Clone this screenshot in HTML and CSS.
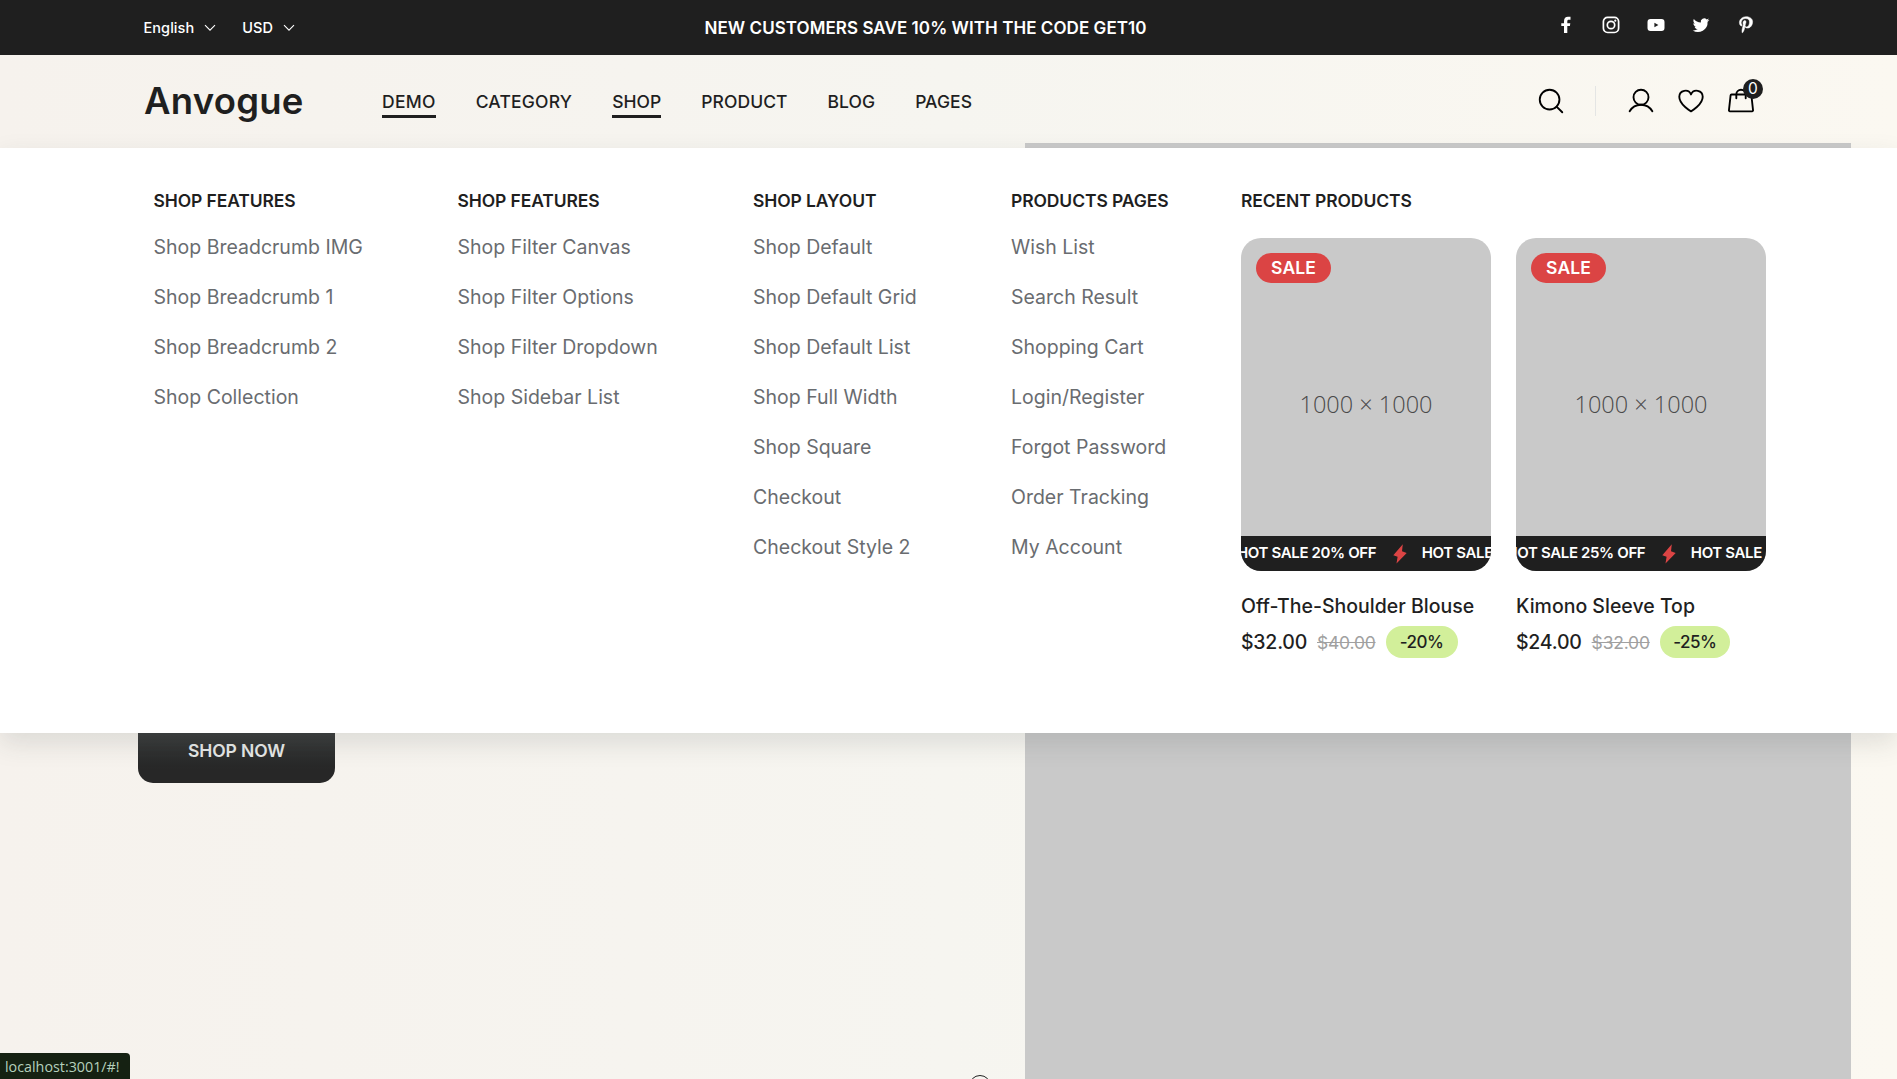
FILE: index.html
```html
<!DOCTYPE html>
<html lang="en">
<head>
<meta charset="utf-8">
<title>Anvogue</title>
<link rel="stylesheet" href="styles.css">
</head>
<body>
<div class="topbar">
  <div class="selects">
    <span class="select">English <svg class="caret" viewBox="0 0 12 8"><path d="M1 1.2l5 5 5-5"/></svg></span>
    <span class="select">USD <svg class="caret" viewBox="0 0 12 8"><path d="M1 1.2l5 5 5-5"/></svg></span>
  </div>
  <div class="promo">NEW CUSTOMERS SAVE 10% WITH THE CODE GET10</div>
  <div class="social">
    <svg viewBox="0 0 20 20"><path d="M8 18v-7H5.300V8.200H8V6c0-2.700 1.600-4.200 4-4.200h2.500v2.900h-1.600c-1.300 0-1.600.6-1.600 1.500v2h3l-.4 2.800h-2.600v7z"/></svg>
    <svg viewBox="0 0 20 20"><g fill="none" stroke="#fff"><rect x="2.400" y="2.300" width="15.200" height="15.200" rx="4.200" stroke-width="1.700"/><circle cx="10" cy="10" r="3.700" stroke-width="1.700"/></g><circle cx="14.300" cy="5.700" r="1.100"/></svg>
    <svg viewBox="0 0 20 20"><path fill-rule="evenodd" d="M4.500 3.900h11a3 3 0 0 1 3 3v6.200a3 3 0 0 1-3 3h-11a3 3 0 0 1-3-3V6.900a3 3 0 0 1 3-3zM8.400 7.800v4.400l4-2.200z"/></svg>
    <svg viewBox="0 0 24 24"><path d="M22 5.900c-.7.300-1.500.6-2.400.7.900-.5 1.500-1.300 1.800-2.300-.8.500-1.700.8-2.600 1a4.100 4.100 0 0 0-7 3.700C8.400 8.900 5.400 7.300 3.400 4.800c-1.100 1.900-.5 4.300 1.300 5.500-.7 0-1.300-.2-1.900-.5 0 2 1.400 3.700 3.300 4.100-.6.200-1.200.2-1.800.1.500 1.600 2 2.800 3.800 2.800A8.300 8.300 0 0 1 2 18.500a11.600 11.600 0 0 0 17.900-10.400c.8-.6 1.500-1.300 2.100-2.200z"/></svg>
    <svg viewBox="0 0 24 24"><path d="M12.300 2C6.900 2 4.100 5.800 4.100 9c0 1.900.7 3.600 2.300 4.300.3.100.5 0 .6-.3l.2-.9c.1-.3 0-.4-.2-.7-.5-.5-.8-1.200-.8-2.200 0-2.800 2.100-5 5.400-5 3 0 4.600 1.800 4.600 4.200 0 3.200-1.400 5.900-3.500 5.900-1.200 0-2-.9-1.700-2.100.3-1.400 1-2.900 1-3.900 0-.9-.5-1.700-1.500-1.700-1.200 0-2.100 1.200-2.100 2.900 0 1 .4 1.800.4 1.800l-1.400 5.900c-.4 1.700-.1 3.900 0 4.100 0 .1.200.2.300.1.100-.1 1.700-2.100 2.200-4l.8-3.200c.4.800 1.600 1.500 2.900 1.500 3.800 0 6.300-3.400 6.300-8C19.900 4.900 16.900 2 12.300 2z" stroke="#fff" stroke-width=".6"/></svg>
  </div>
</div>

<header class="header">
  <div class="logo">Anvogue</div>
  <nav class="nav">
    <a class="active">DEMO</a><a>CATEGORY</a><a class="active">SHOP</a><a>PRODUCT</a><a>BLOG</a><a>PAGES</a>
  </nav>
  <div class="actions">
    <svg viewBox="0 0 256 256"><circle cx="116" cy="116" r="84"/><path d="M175.400 175.400L224 224"/></svg>
    <i class="divider"></i>
    <svg viewBox="0 0 256 256"><circle cx="128" cy="96" r="64"/><path d="M31 216a112 112 0 0 1 194 0"/></svg>
    <svg viewBox="0 0 256 256"><path d="M128 216S28 160 28 92a52 52 0 0 1 100-20 52 52 0 0 1 100 20c0 68-100 124-100 124z"/></svg>
    <div class="cart">
      <svg viewBox="0 0 256 256"><path d="M208.800 72H47.200a8.100 8.100 0 0 0-8 7.100L25.100 207.100a8 8 0 0 0 7.900 8.900H223a8 8 0 0 0 7.900-8.900L216.700 79.100a8 8 0 0 0-7.900-7.100zM88 104V72a40 40 0 0 1 80 0v32"/></svg>
      <span class="count">0</span>
    </div>
  </div>
</header>

<main class="hero">
  <a class="shop-now">SHOP NOW</a>
  <div class="hero-image"></div>
  <div class="ring"></div>
</main>

<section class="mega">
  <div class="col">
    <h3>SHOP FEATURES</h3>
    <a>Shop Breadcrumb IMG</a><a>Shop Breadcrumb 1</a><a>Shop Breadcrumb 2</a><a>Shop Collection</a>
  </div>
  <div class="col">
    <h3>SHOP FEATURES</h3>
    <a>Shop Filter Canvas</a><a>Shop Filter Options</a><a>Shop Filter Dropdown</a><a>Shop Sidebar List</a>
  </div>
  <div class="col">
    <h3>SHOP LAYOUT</h3>
    <a>Shop Default</a><a>Shop Default Grid</a><a>Shop Default List</a><a>Shop Full Width</a><a>Shop Square</a><a>Checkout</a><a>Checkout Style 2</a>
  </div>
  <div class="col">
    <h3>PRODUCTS PAGES</h3>
    <a>Wish List</a><a>Search Result</a><a>Shopping Cart</a><a>Login/Register</a><a>Forgot Password</a><a>Order Tracking</a><a>My Account</a>
  </div>
  <div class="recent">
    <h3>RECENT PRODUCTS</h3>
    <div class="products">
      <article>
        <div class="thumb">
          <span class="sale">SALE</span>
          <span class="size">1000 × 1000</span>
          <div class="marquee first"><span>HOT SALE 20% OFF</span><svg viewBox="0 0 14 20"><path d="M9.800.3L.3 11.300l4.300 1.500-1.100 6.700 10.200-10.600-4.700-1.700z"/></svg><span>HOT SALE</span></div>
        </div>
        <h4>Off-The-Shoulder Blouse</h4>
        <div class="price"><b>$32.00</b><del>$40.00</del><span class="off">-20%</span></div>
      </article>
      <article>
        <div class="thumb">
          <span class="sale">SALE</span>
          <span class="size">1000 × 1000</span>
          <div class="marquee second"><span>HOT SALE 25% OFF</span><svg viewBox="0 0 14 20"><path d="M9.800.3L.3 11.300l4.300 1.500-1.100 6.700 10.200-10.600-4.700-1.700z"/></svg><span>HOT SALE</span></div>
        </div>
        <h4>Kimono Sleeve Top</h4>
        <div class="price"><b>$24.00</b><del>$32.00</del><span class="off narrow">-25%</span></div>
      </article>
    </div>
  </div>
</section>

<div class="status">localhost:3001/#!</div>
</body>
</html>
```
FILE: styles.css
```css
* { box-sizing: border-box; margin: 0; padding: 0; }
body {
  position: relative;
  width: 1897px;
  height: 1079px;
  overflow: hidden;
  display: flex;
  flex-direction: column;
  font-family: Inter, "Liberation Sans", sans-serif;
  color: #1f1f1f;
  background: linear-gradient(90deg, #f6f2ed 0%, #f6f5f0 50%, #fbf8f1 100%);
}

/* top bar */
.topbar {
  position: relative;
  z-index: 3;
  flex: none;
  height: 55px;
  padding: 0 141px 0 143.5px;
  display: grid;
  grid-template-columns: 561px 445px 1fr;
  align-items: center;
  background: #1f1f1f;
  color: #fff;
}
.selects { display: flex; gap: 26px; }
.select { display: flex; align-items: center; gap: 10px; font-size: 14.5px; font-weight: 450; letter-spacing: .004em; line-height: 20px; }
.caret { width: 12px; height: 8px; fill: none; stroke: #fff; stroke-width: 1.1; }
.promo { font-size: 17px; font-weight: 600; letter-spacing: .0035em; line-height: 24px; white-space: nowrap; }
.social { display: flex; justify-content: flex-end; gap: 25px; padding-bottom: 5px; }
.social svg { width: 20px; height: 20px; fill: #fff; }

/* header */
.header {
  position: relative;
  z-index: 3;
  flex: none;
  height: 93px;
  padding: 0 141px 0 144px;
  display: flex;
  align-items: center;
}
.logo { width: 238px; font-size: 36.5px; font-weight: 560; letter-spacing: .006em; line-height: 44px; padding-bottom: 2px; }
.nav { display: flex; gap: 40px; }
.nav a {
  font-size: 17.5px;
  font-weight: 500;
  letter-spacing: .003em;
  line-height: 26px;
  border-bottom: 3px solid transparent;
  margin-top: 4px;
}
.nav a:first-child { letter-spacing: .016em; }
.nav a:nth-child(2) { letter-spacing: .011em; }
.nav .active { border-color: #1f1f1f; }
.actions { margin-left: auto; display: flex; align-items: center; gap: 20px; padding-bottom: 1px; }
.actions svg { display: block; width: 30px; height: 30px; fill: none; stroke: #000; stroke-width: 16; stroke-linecap: round; stroke-linejoin: round; }
.divider { width: 1px; height: 30px; margin: 0 10px 0 9px; background: #e4e5e4; }
.cart { position: relative; }
.count {
  position: absolute;
  left: 17px;
  top: -7px;
  width: 20px;
  height: 20px;
  border-radius: 50%;
  background: #1f1f1f;
  color: #fff;
  font-size: 15.5px;
  line-height: 20px;
  text-align: center;
}

/* hero, mostly covered by the open menu */
.hero { position: absolute; inset: 143px 0 0 0; display: flex; justify-content: space-between; padding: 0 46.5px 0 138px; }
.hero-image { width: 826px; background: #c9c9c9; }
.shop-now {
  width: 197px;
  height: 70px;
  margin-top: 570px;
  border-radius: 15px;
  background: linear-gradient(#3b3d3d 22px, #2e2f2f 40px, #272727 56px);
  color: #e6e8e7;
  font-size: 17.5px;
  font-weight: 600;
  letter-spacing: -.005em;
  line-height: 76px;
  text-align: center;
}
.ring { position: absolute; left: 969px; top: 932px; width: 22px; height: 22px; border: 1px solid #222; border-radius: 50%; }

/* mega menu */
.mega {
  position: relative;
  z-index: 2;
  flex: none;
  height: 585px;
  padding: 40px 131px 0 153.5px;
  display: grid;
  grid-template-columns: 304px 295.5px 258px 230px 525px;
  background: #fff;
  box-shadow: 0 10px 25px 0 rgba(43, 52, 52, .13);
}
h3 { font-size: 17.5px; font-weight: 580; letter-spacing: -.006em; line-height: 25px; }
.col { display: flex; flex-direction: column; gap: 20px; }
.col h3 { margin-bottom: -1px; }
.col a { font-size: 19.5px; letter-spacing: 0; line-height: 30px; color: #696c70; }
.recent h3 { margin-bottom: 25px; }
.products { display: flex; gap: 25px; }
article { width: 250px; }
.thumb {
  position: relative;
  height: 333px;
  border-radius: 20px;
  overflow: hidden;
  display: flex;
  align-items: center;
  justify-content: center;
  background: #c9c9c9;
}
.size { margin-bottom: 2px; font: 350 23.500px "Open Sans", "Noto Sans", sans-serif; color: #4a4a4a; }
.sale {
  position: absolute;
  left: 15px;
  top: 15px;
  width: 75px;
  height: 30px;
  border-radius: 15px;
  background: #db4444;
  color: #fff;
  font-size: 17.5px;
  font-weight: 600;
  letter-spacing: .005em;
  line-height: 30px;
  text-align: center;
}
.marquee {
  position: absolute;
  inset: auto 0 0 0;
  height: 35px;
  display: flex;
  align-items: center;
  background: #1f1f1f;
  color: #fff;
  font-size: 15px;
  font-weight: 600;
  letter-spacing: -.024em;
  white-space: nowrap;
}
.marquee span { flex: none; line-height: 32px; padding-bottom: 2px; }
.marquee svg { flex: none; width: 14px; height: 20px; margin: 0 14.5px 0 17px; fill: #db4444; }
.marquee.first span:first-child { margin-left: -4px; }
.marquee.second span:first-child { margin-left: -9.5px; }
h4 { margin-top: 20px; font-size: 19.5px; font-weight: 480; line-height: 30px; letter-spacing: 0; white-space: nowrap; }
.price { display: flex; align-items: center; gap: 10px; margin-top: 5px; }
.price b { font-size: 19.5px; font-weight: 500; letter-spacing: -.012em; line-height: 30px; }
.price del { font-size: 17.5px; letter-spacing: -.012em; color: #a0a0a0; }
.off {
  width: 72px;
  height: 32px;
  border-radius: 16px;
  background: #d2ef9a;
  font-size: 17px;
  font-weight: 480;
  letter-spacing: -.03em;
  line-height: 32px;
  text-align: center;
}
.off.narrow { width: 70px; }

/* browser link hint */
.status {
  position: absolute;
  z-index: 4;
  left: 0;
  bottom: 0;
  width: 130px;
  height: 26px;
  padding-left: 5px;
  border-top-right-radius: 4px;
  background: #152112;
  color: #b4d0bc;
  font: 14.3px/27px "Open Sans", "Noto Sans", sans-serif;
}
```
